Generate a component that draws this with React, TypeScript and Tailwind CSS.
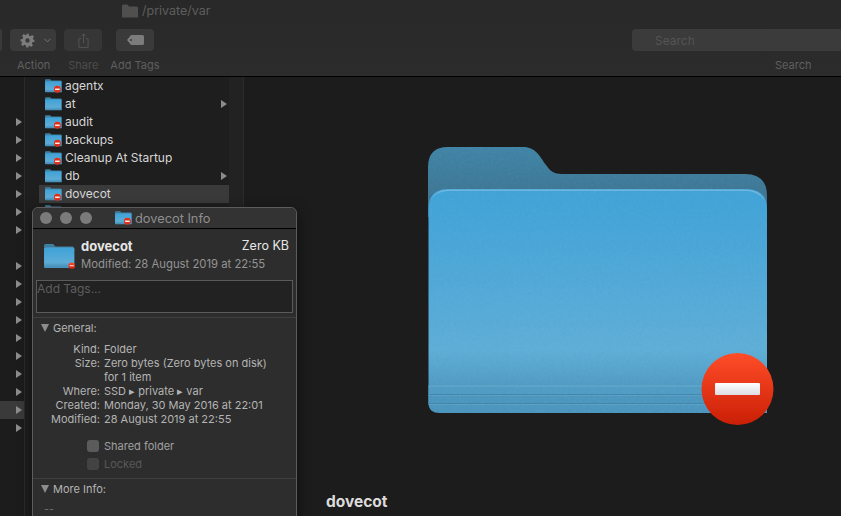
const FONT = "font-['Inter','Liberation_Sans',sans-serif]";

function FolderIcon({ className, badge = "large", textured = false }: { className: string; badge?: "none" | "small" | "large"; textured?: boolean }) {
  return (
    <svg viewBox="0 0 346 278" className={className}>
      <defs>
        <linearGradient id="folderBack" x1="0" y1="0" x2="0" y2="1">
          <stop offset="0" stopColor="#3f84a6" />
          <stop offset="1" stopColor="#3c6f8b" />
        </linearGradient>
        <linearGradient id="folderFront" x1="0" y1="0" x2="0" y2="1">
          <stop offset="0" stopColor="#3fa2d7" />
          <stop offset="0.3" stopColor="#4ba6d7" />
          <stop offset="0.72" stopColor="#5dadd6" />
          <stop offset="0.88" stopColor="#4f9ac3" />
          <stop offset="1" stopColor="#4a95bd" />
        </linearGradient>
        <linearGradient id="badgeFill" x1="0" y1="0" x2="0" y2="1">
          <stop offset="0" stopColor="#ff4d28" />
          <stop offset="1" stopColor="#ca1f06" />
        </linearGradient>
        <linearGradient id="badgeBar" x1="0" y1="0" x2="0" y2="1">
          <stop offset="0" stopColor="#ffffff" />
          <stop offset="1" stopColor="#dcdde2" />
        </linearGradient>
        <filter id="paper">
          <feTurbulence type="fractalNoise" baseFrequency="0.35" numOctaves="3" seed="4" />
          <feColorMatrix values="0 0 0 0 1  0 0 0 0 1  0 0 0 0 1  0.5 0 0 0 -0.1" />
        </filter>
        <clipPath id="folderClip">
          <path d="M0 70 V20 Q0 0 20 0 H95 C108 0 112 10 118 18 C122 24 126 27 134 27 H317 Q339 27 339 49 V266 H12 Q0 266 0 256 Z" />
        </clipPath>
      </defs>
      <path
        d="M0 70 V20 Q0 0 20 0 H95 C108 0 112 10 118 18 C122 24 126 27 134 27 H317 Q339 27 339 49 V70 Z"
        fill="url(#folderBack)"
      />
      <path
        d="M0.5 62 Q0.5 42 20 42 H318 Q339 42 339 62 V266 H12 Q0.5 266 0.5 256 Z"
        fill="url(#folderFront)"
      />
      <path d="M20 42.5 H318 Q332 42.5 337 54 Q330 44 318 44 H20 Q8 44 2 54 Q7 42.5 20 42.5 Z" fill="#6db6de" />
      <path d="M0.5 239 H339 V248 H0.5 Z" fill="#4f9bc3" />
      <path d="M0.5 248 H339 V257 H0.5 Z" fill="#4b95bd" />
      <path d="M0.5 239 H339 M0.5 248 H339 M0.5 257 H339" stroke="#68a9cc" strokeWidth="1" />
      <path d="M0.5 247.5 H339 M0.5 256.5 H339" stroke="#3f85ab" strokeWidth="1" />
      {textured && <rect width="340" height="267" filter="url(#paper)" clipPath="url(#folderClip)" opacity="0.1" />}
      {badge === "large" && (
        <g>
          <circle cx="309.5" cy="242" r="36" fill="url(#badgeFill)" />
          <rect x="287" y="236" width="45" height="12" rx="1" fill="url(#badgeBar)" />
        </g>
      )}
      {badge === "small" && (
        <g>
          <circle cx="252" cy="206" r="70" fill="#e0301a" />
          <rect x="205" y="191" width="94" height="30" fill="#f4f4f4" />
        </g>
      )}
    </svg>
  );
}

function Arrow() {
  return <span className="block w-0 h-0 border-y-[4px] border-y-transparent border-l-[6px] border-l-[#8c8c8c]" />;
}

const parentRows = [
  false, false, true, true, true, true, true, true, true, false,
  true, true, true, true, true, true, true, true, true, true,
];

const varRows = [
  { name: "agentx", locked: true, more: false },
  { name: "at", locked: false, more: true },
  { name: "audit", locked: true, more: false },
  { name: "backups", locked: true, more: false },
  { name: "Cleanup At Startup", locked: true, more: false },
  { name: "db", locked: false, more: true },
  { name: "dovecot", locked: true, more: false, selected: true },
  { name: "", locked: true, more: false },
];

const infoRows = [
  ["Kind:", "Folder"],
  ["Size:", "Zero bytes (Zero bytes on disk)"],
  ["", "for 1 item"],
  ["Where:", "SSD ▸ private ▸ var"],
  ["Created:", "Monday, 30 May 2016 at 22:01"],
  ["Modified:", "28 August 2019 at 22:55"],
];

function InfoWindow() {
  return (
    <div className="absolute left-[32px] top-[207px] w-[265px] h-[320px] rounded-t-[6px] border border-[#5c5c5c] bg-[#2d2d2d] shadow-[0_4px_14px_rgba(0,0,0,0.5)]">
      <div className="h-[21px] flex items-center border-b border-black bg-[#333333] rounded-t-[6px] relative">
        <div className="flex gap-[8px] pl-[7px]">
          <span className="w-[12px] h-[12px] rounded-full bg-[#7b7b7b]" />
          <span className="w-[12px] h-[12px] rounded-full bg-[#7b7b7b]" />
          <span className="w-[12px] h-[12px] rounded-full bg-[#7b7b7b]" />
        </div>
        <FolderIcon className="ml-[23px] w-[17px] h-[14px]" badge="small" />
        <span className="ml-[3px] pt-[1px] text-[12.8px] text-[#8e8e8e]">dovecot Info</span>
      </div>

      <div className="flex h-[51px] pl-[11px] pr-[7px] pt-[15px]">
        <FolderIcon className="w-[31px] h-[25px] shrink-0" />
        <div className="ml-[6px] flex-1 -mt-[6px]">
          <div className="flex justify-between text-[13px] leading-[16px] text-[#e6e6e6]">
            <span className="font-bold">dovecot</span>
            <span className="text-[12.5px]">Zero KB</span>
          </div>
          <div className="mt-[3px] text-[11.3px] leading-[14px] text-[#949494]">Modified: 28 August 2019 at 22:55</div>
        </div>
      </div>

      <div className="mx-[3px] h-[33px] border border-[#5a5a5a] bg-[#222222] text-[12px] leading-[15px] text-[#5e5e5e]">
        Add Tags...
      </div>

      <div className="mt-[4px] border-t border-[#3f3f3f] pt-[3px]">
        <div className="flex items-center h-[14px] pl-[8px]">
          <span className="w-0 h-0 border-x-[4.5px] border-x-transparent border-t-[8px] border-t-[#8c8c8c]" />
          <span className="ml-[4px] text-[11px] text-[#b4b4b4]">General:</span>
        </div>
        <div className="mt-[7px] grid grid-cols-[67px_1fr] gap-x-[4px] text-[11px] leading-[14px] text-[#b4b4b4]">
          {infoRows.map(([label, value], i) => (
            <div key={i} className="contents">
              <span className="text-right">{label}</span>
              <span className="whitespace-nowrap">{value}</span>
            </div>
          ))}
        </div>
        <div className="mt-[11px] pl-[54px] text-[11px] text-[#a0a0a0]">
          <div className="flex items-center h-[18px]">
            <span className="w-[12px] h-[12px] rounded-[3px] bg-[#5b5b5b]" />
            <span className="ml-[5px]">Shared folder</span>
          </div>
          <div className="flex items-center h-[18px] text-[#585858]">
            <span className="w-[12px] h-[12px] rounded-[3px] bg-[#434343]" />
            <span className="ml-[5px]">Locked</span>
          </div>
        </div>
      </div>

      <div className="mt-[5px] border-t border-[#3f3f3f] pt-[3px]">
        <div className="flex items-center h-[14px] pl-[8px]">
          <span className="w-0 h-0 border-x-[4.5px] border-x-transparent border-t-[8px] border-t-[#8c8c8c]" />
          <span className="ml-[4px] text-[11px] text-[#b4b4b4]">More Info:</span>
        </div>
        <div className="mt-[6px] pl-[11px] text-[11px] leading-[14px] text-[#6e6e6e]">--</div>
      </div>
    </div>
  );
}

export default function App() {
  return (
    <div className={`${FONT} relative w-[841px] h-[516px] overflow-hidden bg-[#1c1c1c] antialiased`}>
      {/* Toolbar */}
      <div className="h-[77px] border-b border-black bg-gradient-to-b from-[#282828] to-[#2c2c2c]">
        <div className="h-[29px] pl-[122px] pt-[3px] flex items-start">
          <svg viewBox="0 0 16 13" className="w-[16px] h-[14px] mt-[1px] fill-[#4f4f4f]">
            <path d="M0 1.5 Q0 0 1.5 0 H5.5 L7 2 H14.5 Q16 2 16 3.5 V13 H0 Z" />
          </svg>
          <span className="ml-[4px] text-[12.5px] leading-[16px] text-[#5e5e5e]">/private/var</span>
        </div>
        <div className="flex h-[22px]">
          <div className="w-[2px] rounded-r-[3px] bg-[#393939]" />
          <div className="ml-[8px] w-[46px] rounded-[4px] bg-[#3a3a3a] flex items-center pl-[10px]">
            <svg viewBox="0 0 24 24" className="w-[15px] h-[15px] fill-[#7c7c7c]">
              <path
                fillRule="evenodd"
                d="M10 1 h4 l.6 3.2 a8.5 8.5 0 0 1 2.2 .9 l2.7-1.8 2.8 2.8 -1.8 2.7 a8.5 8.5 0 0 1 .9 2.2 L23 10 v4 l-3.2 .6 a8.5 8.5 0 0 1 -.9 2.2 l1.8 2.7 -2.8 2.8 -2.7-1.8 a8.5 8.5 0 0 1 -2.2 .9 L14 23 h-4 l-.6-3.2 a8.5 8.5 0 0 1 -2.2-.9 l-2.7 1.8 -2.8-2.8 1.8-2.7 a8.5 8.5 0 0 1 -.9-2.2 L1 14 v-4 l3.2-.6 a8.5 8.5 0 0 1 .9-2.2 L3.3 4.5 l2.8-2.8 2.7 1.8 a8.5 8.5 0 0 1 2.2-.9 Z M12 8.5 a3.5 3.5 0 1 0 0 7 a3.5 3.5 0 1 0 0-7 Z"
              />
            </svg>
            <svg viewBox="0 0 8 5" className="ml-[9px] w-[7px] h-[5px] fill-none stroke-[#7c7c7c]">
              <path d="M0.5 0.5 L4 4 L7.5 0.5" />
            </svg>
          </div>
          <div className="ml-[8px] w-[38px] rounded-[4px] bg-[#363636] flex items-center justify-center">
            <svg viewBox="0 0 12 16" className="w-[11px] h-[15px] fill-none stroke-[#565656]">
              <path d="M3.5 6 H1 V15.5 H11 V6 H8.5 M6 11 V1 M3.5 3.2 L6 1 L8.5 3.2" />
            </svg>
          </div>
          <div className="ml-[14px] w-[38px] rounded-[4px] bg-[#3a3a3a] flex items-center justify-center">
            <svg viewBox="0 0 17 10" className="w-[17px] h-[10px] fill-[#7c7c7c]">
              <path fillRule="evenodd" d="M4 0 H15.5 Q17 0 17 1.5 V8.5 Q17 10 15.5 10 H4 L0 5 Z M4 4 a1 1 0 1 0 0 2 a1 1 0 1 0 0-2 Z" />
            </svg>
          </div>
          <div className="ml-auto w-[209px] rounded-l-[4px] bg-[#3b3b3b] pl-[23px] text-[12px] leading-[23px] text-[#545454]">
            Search
          </div>
        </div>
        <div className="relative flex h-[25px] pt-[7px] text-[11px] leading-[14px] text-[#5f5f5f]">
          <span className="ml-[17px]">Action</span>
          <span className="ml-[18px] text-[#4c4c4c]">Share</span>
          <span className="ml-[12px]">Add Tags</span>
          <span className="absolute left-[775px]">Search</span>
        </div>
      </div>

      {/* Columns */}
      <div className="flex h-[439px]">
        <div className="w-[25px] border-r border-[#2a2a2a] bg-[#1c1c1c] flex flex-col">
          {parentRows.map((more, i) => (
            <div key={i} className={`h-[18px] flex items-center justify-end pr-[2px] shrink-0 ${i === 18 ? "bg-[#3a3a3a]" : ""}`}>
              {more && <Arrow />}
            </div>
          ))}
        </div>
        <div className="w-[14px] bg-[#1e1e1e]" />
        <div className="w-[190px] bg-[#1e1e1e] flex flex-col">
          {varRows.map((row) => (
            <div key={row.name || "next"} className={`h-[18px] shrink-0 flex items-center pl-[6px] pr-[2px] ${row.selected ? "bg-[#3a3a3a]" : ""}`}>
              <FolderIcon className="w-[17px] h-[14px] shrink-0" badge={row.locked ? "small" : "none"} />
              <span className="ml-[3px] text-[12px] text-[#d6d6d6] flex-1">{row.name}</span>
              {row.more && <Arrow />}
            </div>
          ))}
        </div>
        <div className="w-[15px] bg-[#222222] border-r border-[#2a2a2a]" />
        <div className="flex-1 bg-[#1c1c1c] pt-[70px] pl-[184px]">
          <FolderIcon className="w-[346px] h-[278px]" textured />
          <div className="mt-[67px] -ml-[102px] text-[15.5px] leading-[20px] font-bold text-[#dcdcdc]">dovecot</div>
        </div>
      </div>

      <InfoWindow />
    </div>
  );
}
